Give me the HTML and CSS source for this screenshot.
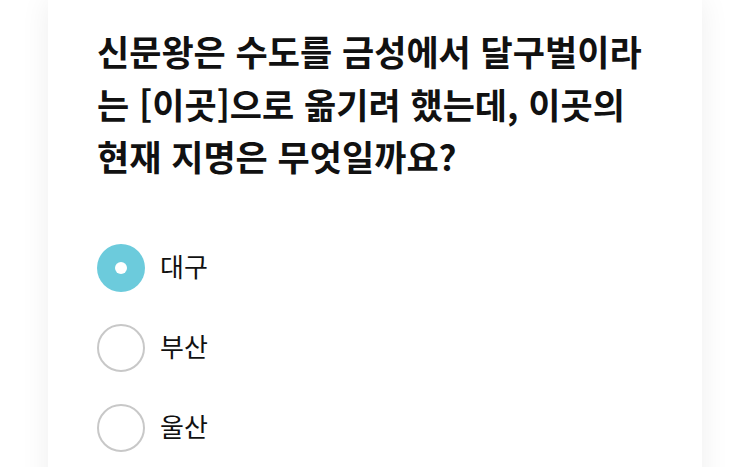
FILE: index.html
```html
<!DOCTYPE html>
<html lang="ko">
<head>
<meta charset="utf-8">
<link rel="stylesheet" href="styles.css">
</head>
<body>
<div class="card">
  <h1 class="question">신문왕은 수도를 금성에서 달구벌이라는 [이곳]으로 옮기려 했는데, 이곳의 현재 지명은 무엇일까요?</h1>
  <ul class="options">
    <li class="option selected"><span class="radio"></span><span class="label">대구</span></li>
    <li class="option"><span class="radio"></span><span class="label">부산</span></li>
    <li class="option"><span class="radio"></span><span class="label">울산</span></li>
  </ul>
</div>
</body>
</html>
```

FILE: styles.css
```css
html, body {
  margin: 0;
  padding: 0;
  background: #ffffff;
  height: 467px;
  overflow: hidden;
}
body {
  font-family: "Noto Sans CJK KR", "Noto Sans", sans-serif;
  color: #111111;
}
.card {
  margin: 0 48px;
  background: #ffffff;
  box-shadow: 0 0 28px rgba(0, 0, 0, 0.07);
  padding: 25px 42px 40px 49px;
  min-height: 500px;
}
.question {
  margin: 0;
  font-size: 35px;
  font-weight: 700;
  line-height: 52.5px;
  letter-spacing: 0;
  color: #111111;
}
.options {
  list-style: none;
  margin: 61px 0 0 0;
  padding: 0;
  display: flex;
  flex-direction: column;
  gap: 32px;
}
.option {
  display: flex;
  align-items: center;
  height: 48px;
}
.radio {
  box-sizing: border-box;
  width: 48px;
  height: 48px;
  border-radius: 50%;
  border: 2px solid #c8c8c8;
  background: #ffffff;
  flex: none;
  display: flex;
  align-items: center;
  justify-content: center;
}
.selected .radio {
  border: none;
  background: #6ccbdc;
}
.selected .radio::after {
  content: "";
  width: 12px;
  height: 12px;
  border-radius: 50%;
  background: #ffffff;
}
.label {
  margin-left: 15px;
  padding-bottom: 4px;
  font-size: 26px;
  font-weight: 400;
  color: #111111;
}
```
